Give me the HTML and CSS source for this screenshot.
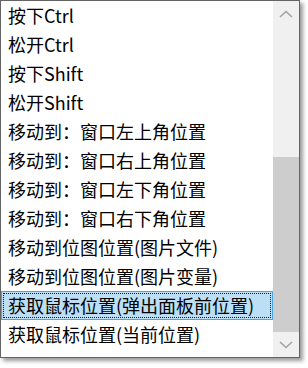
FILE: index.html
```
<!DOCTYPE html>
<html lang="zh-CN">
<head>
    <meta charset="UTF-8">
    <meta name="viewport" content="width=device-width, initial-scale=1.0">
    <title>下拉列表</title>
    <link rel="stylesheet" href="styles.css">
</head>
<body>
    <div class="dropdown">
        <ul class="list">
            <li class="item">按下Ctrl</li>
            <li class="item">松开Ctrl</li>
            <li class="item">按下Shift</li>
            <li class="item">松开Shift</li>
            <li class="item">移动到：窗口左上角位置</li>
            <li class="item">移动到：窗口右上角位置</li>
            <li class="item">移动到：窗口左下角位置</li>
            <li class="item">移动到：窗口右下角位置</li>
            <li class="item">移动到位图位置(图片文件)</li>
            <li class="item">移动到位图位置(图片变量)</li>
            <li class="item selected">获取鼠标位置(弹出面板前位置)</li>
            <li class="item">获取鼠标位置(当前位置)</li>
        </ul>
        <div class="scrollbar">
            <div class="sb-btn">
                <svg width="14" height="8" viewBox="0 0 14 8"><polyline points="1,7 7,1.5 13,7" fill="none" stroke="#a3a3a3" stroke-width="1.6"/></svg>
            </div>
            <div class="sb-track">
                <div class="sb-thumb"></div>
            </div>
            <div class="sb-btn">
                <svg width="14" height="8" viewBox="0 0 14 8"><polyline points="1,1 7,6.5 13,1" fill="none" stroke="#a3a3a3" stroke-width="1.6"/></svg>
            </div>
        </div>
    </div>
</body>
</html>
```

FILE: styles.css
```
* {
    margin: 0;
    padding: 0;
    box-sizing: border-box;
}

body {
    font-family: "Noto Sans CJK SC", "Noto Sans", sans-serif;
    background: #fff;
    width: 308px;
    height: 368px;
    overflow: hidden;
}

.dropdown {
    width: 300px;
    height: 358px;
    border: 1px solid #646464;
    background: #fff;
    display: flex;
    box-shadow: 3px 3px 4px rgba(0, 0, 0, 0.4);
}

.list {
    list-style: none;
    flex: 1;
}

.item {
    height: 29px;
    line-height: 28px;
    padding-left: 7px;
    font-size: 18px;
    color: #000;
    white-space: nowrap;
}

.item.selected {
    background: #bcdff5;
    border: 1px solid #4aa6e0;
    padding-left: 6px;
    line-height: 26px;
    outline: 1px dotted #1a1a1a;
    outline-offset: -3px;
}

.scrollbar {
    width: 26px;
    background: #f0f0f0;
    display: flex;
    flex-direction: column;
}

.sb-btn {
    height: 25px;
    display: flex;
    align-items: center;
    justify-content: center;
}

.sb-track {
    flex: 1;
    display: flex;
    flex-direction: column;
    justify-content: flex-end;
}

.sb-thumb {
    height: 175px;
    background: #cdcdcd;
}
```
